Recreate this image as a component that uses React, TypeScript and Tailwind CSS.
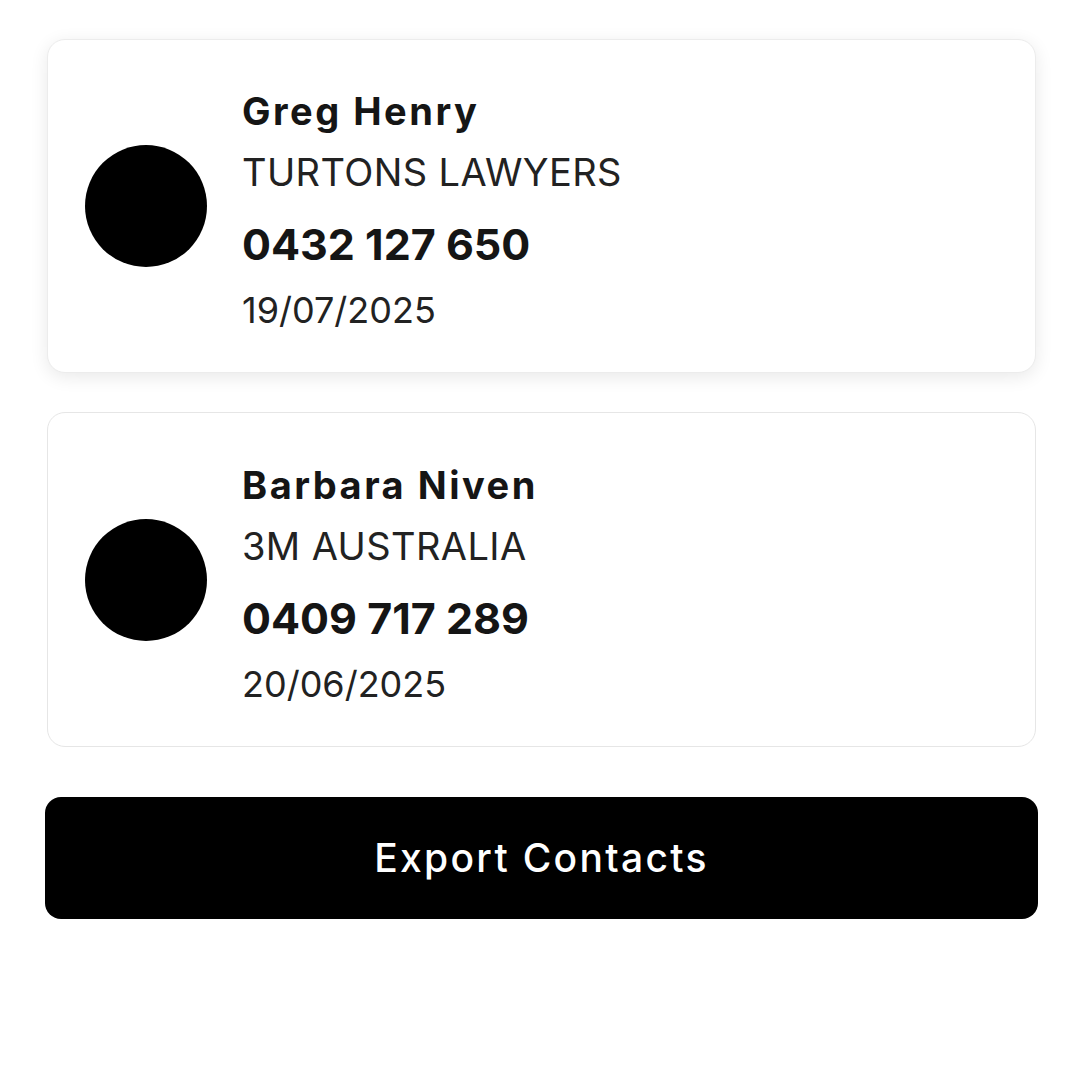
const contacts = [
  { name: 'Greg Henry', company: 'TURTONS LAWYERS', phone: '0432 127 650', date: '19/07/2025', raised: true },
  { name: 'Barbara Niven', company: '3M AUSTRALIA', phone: '0409 717 289', date: '20/06/2025', raised: false },
];

const ContactCard = ({ contact }: { contact: (typeof contacts)[number] }) => {
  return (
    <div
      className={
        contact.raised
          ? 'mx-[2px] h-[334px] flex items-center rounded-[18px] border border-[#ececec] bg-white pl-[37px] shadow-[0_4px_18px_rgba(0,0,0,0.09)]'
          : 'mx-[2px] h-[335px] flex items-center rounded-[18px] border border-[#e6e6e6] bg-white pl-[37px]'
      }
    >
      <div className="w-[122px] h-[122px] rounded-full bg-black shrink-0" />
      <div className="ml-[35px] pt-[8px] flex flex-col text-[#151515]">
        <span className="text-[38px] leading-[46px] font-bold tracking-[2.5px]">{contact.name}</span>
        <span className="mt-[15px] text-[38px] leading-[46px] tracking-[0.4px] text-[#222]">{contact.company}</span>
        <span className="mt-[23px] text-[43px] leading-[52px] font-bold">{contact.phone}</span>
        <span className="mt-[18px] text-[36px] leading-[44px] text-[#222]">{contact.date}</span>
      </div>
    </div>
  );
};

export default function App() {
  return (
    <div className="w-[1080px] h-[1080px] bg-white pl-[45px] pr-[42px] pt-[39px] font-['Inter',sans-serif]">
      <div className="flex flex-col gap-[39px]">
        {contacts.map((c) => (
          <ContactCard key={c.name} contact={c} />
        ))}
      </div>
      <button className="mt-[50px] w-full h-[122px] rounded-[16px] bg-black text-white text-[39px] font-medium tracking-[2.3px]">
        Export Contacts
      </button>
    </div>
  );
}
